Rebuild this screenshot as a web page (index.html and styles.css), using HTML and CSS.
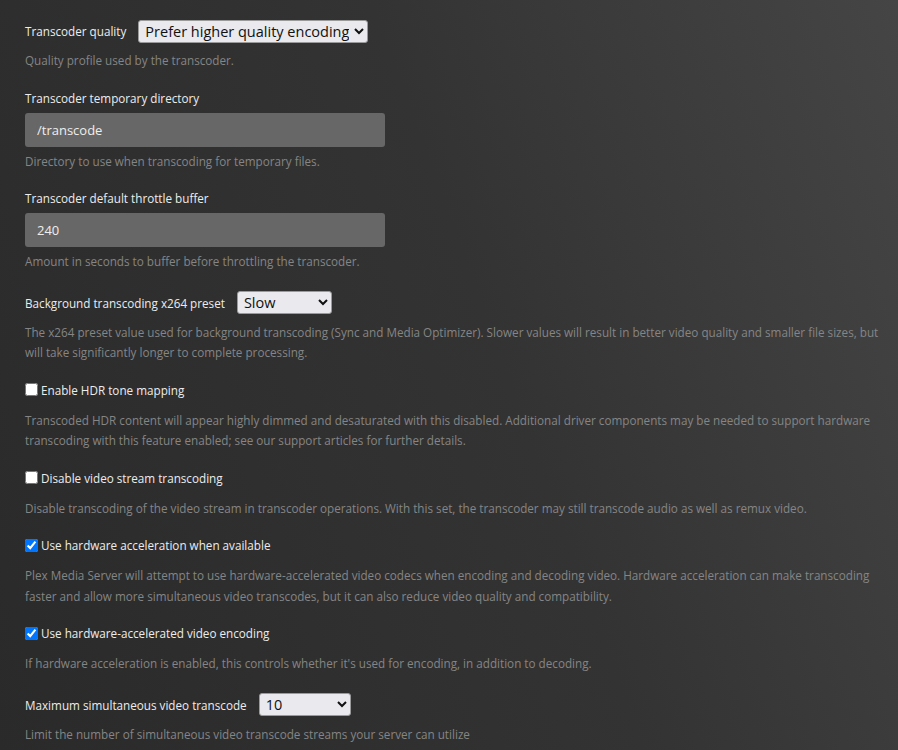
FILE: index.html
```html
<!DOCTYPE html>
<html lang="en">

<head>
  <meta charset="UTF-8">
  <meta name="viewport" content="width=device-width">
  <title>Transcoder</title>
  <link rel="stylesheet" href="styles.css">
</head>

<body>

  <form class="settings">

    <div class="setting">
      <div class="inline-row">
        <label for="quality">Transcoder quality</label>
        <select id="quality">
          <option>Prefer higher quality encoding</option>
        </select>
      </div>
      <p class="help">Quality profile used by the transcoder.</p>
    </div>

    <div class="setting">
      <label class="block-label" for="tempdir">Transcoder temporary directory</label>
      <input id="tempdir" type="text" value="/transcode">
      <p class="help">Directory to use when transcoding for temporary files.</p>
    </div>

    <div class="setting">
      <label class="block-label" for="throttle">Transcoder default throttle buffer</label>
      <input id="throttle" type="text" value="240">
      <p class="help">Amount in seconds to buffer before throttling the transcoder.</p>
    </div>

    <div class="setting">
      <div class="inline-row">
        <label for="preset">Background transcoding x264 preset</label>
        <select id="preset" class="preset-select">
          <option>Slow</option>
        </select>
      </div>
      <p class="help">The x264 preset value used for background transcoding (Sync and Media Optimizer). Slower values will result in better video quality and smaller file sizes, but will take significantly longer to complete processing.</p>
    </div>

    <div class="setting">
      <label class="check-row"><input type="checkbox"> Enable HDR tone mapping</label>
      <p class="help">Transcoded HDR content will appear highly dimmed and desaturated with this disabled. Additional driver components may be needed to support hardware transcoding with this feature enabled; see our support articles for further details.</p>
    </div>

    <div class="setting">
      <label class="check-row"><input type="checkbox"> Disable video stream transcoding</label>
      <p class="help">Disable transcoding of the video stream in transcoder operations. With this set, the transcoder may still transcode audio as well as remux video.</p>
    </div>

    <div class="setting">
      <label class="check-row"><input type="checkbox" checked> Use hardware acceleration when available</label>
      <p class="help">Plex Media Server will attempt to use hardware-accelerated video codecs when encoding and decoding video. Hardware acceleration can make transcoding faster and allow more simultaneous video transcodes, but it can also reduce video quality and compatibility.</p>
    </div>

    <div class="setting">
      <label class="check-row"><input type="checkbox" checked> Use hardware-accelerated video encoding</label>
      <p class="help">If hardware acceleration is enabled, this controls whether it's used for encoding, in addition to decoding.</p>
    </div>

    <div class="setting">
      <div class="inline-row">
        <label for="maxtranscode">Maximum simultaneous video transcode</label>
        <select id="maxtranscode" class="count-select">
          <option>10</option>
        </select>
      </div>
      <p class="help">Limit the number of simultaneous video transcode streams your server can utilize</p>
    </div>

  </form>

</body>

</html>
```

FILE: styles.css
```css
* {
  box-sizing: border-box;
}

html {
  min-height: 100%;
  background: linear-gradient(250deg, #454545 0%, #333 45%, #2a2a2a 100%);
}

body {
  margin: 0;
  padding: 17px 17px 0 25px;
  font-family: "Open Sans", "Noto Sans", sans-serif;
  font-size: 11.7px;
  color: #ececec;
}

.setting {
  margin-bottom: 17px;
}

/* label and dropdown side by side */
.inline-row {
  display: flex;
  align-items: center;
  gap: 12px;
  height: 28px;
}

.block-label {
  display: block;
  line-height: 20px;
  margin-bottom: 5px;
}

select {
  font-family: "Open Sans", "Noto Sans", sans-serif;
  font-size: 14.5px;
  height: 23px;
  padding: 0 2px;
  color: #111;
  background-color: #e9e9ee;
  border: 1px solid #9a9a9a;
  border-radius: 3px;
}

.preset-select {
  width: 95px;
}

.count-select {
  width: 92px;
}

input[type="text"] {
  display: block;
  width: 360px;
  height: 34px;
  padding: 0 12px;
  border: none;
  border-radius: 3px;
  background-color: #676767;
  color: #eee;
  font-family: inherit;
  font-size: 13px;
}

.check-row {
  display: flex;
  align-items: center;
  gap: 2px;
  line-height: 20px;
}

.check-row input {
  margin: 0 1px 0 0;
}

.help {
  margin: 5px 0 0;
  color: #858585;
  line-height: 20.5px;
}

input[type="text"] + .help {
  margin-top: 4px;
}

.check-row + .help {
  margin-top: 10px;
}
```
